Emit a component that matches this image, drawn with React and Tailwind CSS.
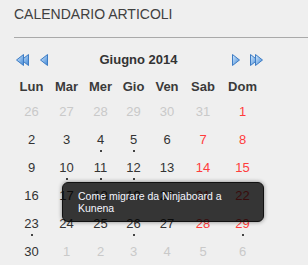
import React from "react";

const weeks = [
  [26, 27, 28, 29, 30, 31, 1],
  [2, 3, 4, 5, 6, 7, 8],
  [9, 10, 11, 12, 13, 14, 15],
  [16, 17, 18, 19, 20, 21, 22],
  [23, 24, 25, 26, 27, 28, 29],
  [30, 1, 2, 3, 4, 5, 6],
];

const withArticles = [4, 5, 10, 11, 12, 23, 26, 29];
const dayNames = ["Lun", "Mar", "Mer", "Gio", "Ven", "Sab", "Dom"];

const Tri = ({ dir, id }) => {
  const pts = dir === "left" ? "7.5,0.5 0.5,6 7.5,11.5" : "0.5,0.5 7.5,6 0.5,11.5";
  return <polygon points={pts} fill={`url(#${id})`} stroke="#3d7cc4" strokeWidth="1" strokeLinejoin="round" />;
};

const Grad = ({ id }) => (
  <defs>
    <linearGradient id={id} x1="0" y1="0" x2="1" y2="1">
      <stop offset="0" stopColor="#d8ecfd" />
      <stop offset="1" stopColor="#3f86d6" />
    </linearGradient>
  </defs>
);

const Single = ({ dir }) => (
  <svg width="8" height="12" viewBox="0 0 8 12">
    <Grad id={`s-${dir}`} />
    <Tri dir={dir} id={`s-${dir}`} />
  </svg>
);

const Double = ({ dir }) => (
  <svg width="13" height="12" viewBox="0 0 13 12">
    <Grad id={`d-${dir}`} />
    {dir === "left" ? (
      <>
        <g transform="translate(5 0)">
          <Tri dir="left" id={`d-${dir}`} />
        </g>
        <Tri dir="left" id={`d-${dir}`} />
      </>
    ) : (
      <>
        <Tri dir="right" id={`d-${dir}`} />
        <g transform="translate(5 0)">
          <Tri dir="right" id={`d-${dir}`} />
        </g>
      </>
    )}
  </svg>
);

export default function App() {
  return (
    <div className="relative h-[265px] w-[308px] overflow-hidden bg-[#efefef] font-['Liberation_Sans',Arial,sans-serif]">
      {/* Title */}
      <h2 className="pl-[14px] pt-[5px] text-[14px] leading-[18px] text-[#404040]">CALENDARIO ARTICOLI</h2>
      <div className="ml-[14px] mt-[14px] h-px bg-[#a9a9a9]" />

      {/* Month navigation */}
      <div className="mt-[10px] flex h-[24px] items-center pl-[16px]">
        <Double dir="left" />
        <div className="ml-[11px] flex">
          <Single dir="left" />
        </div>
        <div className="w-[181px] text-center text-[13px] font-bold text-[#333]">Giugno 2014</div>
        <div className="ml-[3px] flex">
          <Single dir="right" />
        </div>
        <div className="ml-[10px] flex">
          <Double dir="right" />
        </div>
      </div>

      {/* Calendar grid */}
      <div className="mt-[5px] grid grid-cols-[35px_35px_33px_33px_34px_38px_41px] pl-[14px]">
        {dayNames.map((d) => (
          <div key={d} className="h-[25px] text-center text-[13px] font-bold leading-[20px] text-[#3a3a3a]">
            {d}
          </div>
        ))}
        {weeks.map((week, wi) =>
          week.map((day, di) => {
            const other = (wi === 0 && day > 20) || (wi === 5 && day < 20);
            const weekend = di >= 5;
            const color = other ? "text-[#c9c9c9]" : weekend ? "text-[#ff3c3c]" : "text-[#333]";
            const dot = !other && withArticles.includes(day);
            return (
              <div key={`${wi}-${di}`} className="h-[28px]">
                <div className={`text-center text-[13px] leading-[20px] ${color}`}>{day}</div>
                {dot && <div className="mx-auto h-[2px] w-[2px] bg-[#444]" />}
              </div>
            );
          })
        )}
      </div>

      {/* Tooltip */}
      <div className="absolute left-[62px] top-[182px] h-[40px] w-[202px] rounded-[6px] border border-[#111] bg-black/[0.78] pl-[15px] pr-[10px] pt-[7px] text-[10.5px] leading-[12px] text-[#f4f6ff] shadow-[0_0_4px_rgba(0,0,0,0.45)]">
        Come migrare da Ninjaboard a Kunena
      </div>
    </div>
  );
}
